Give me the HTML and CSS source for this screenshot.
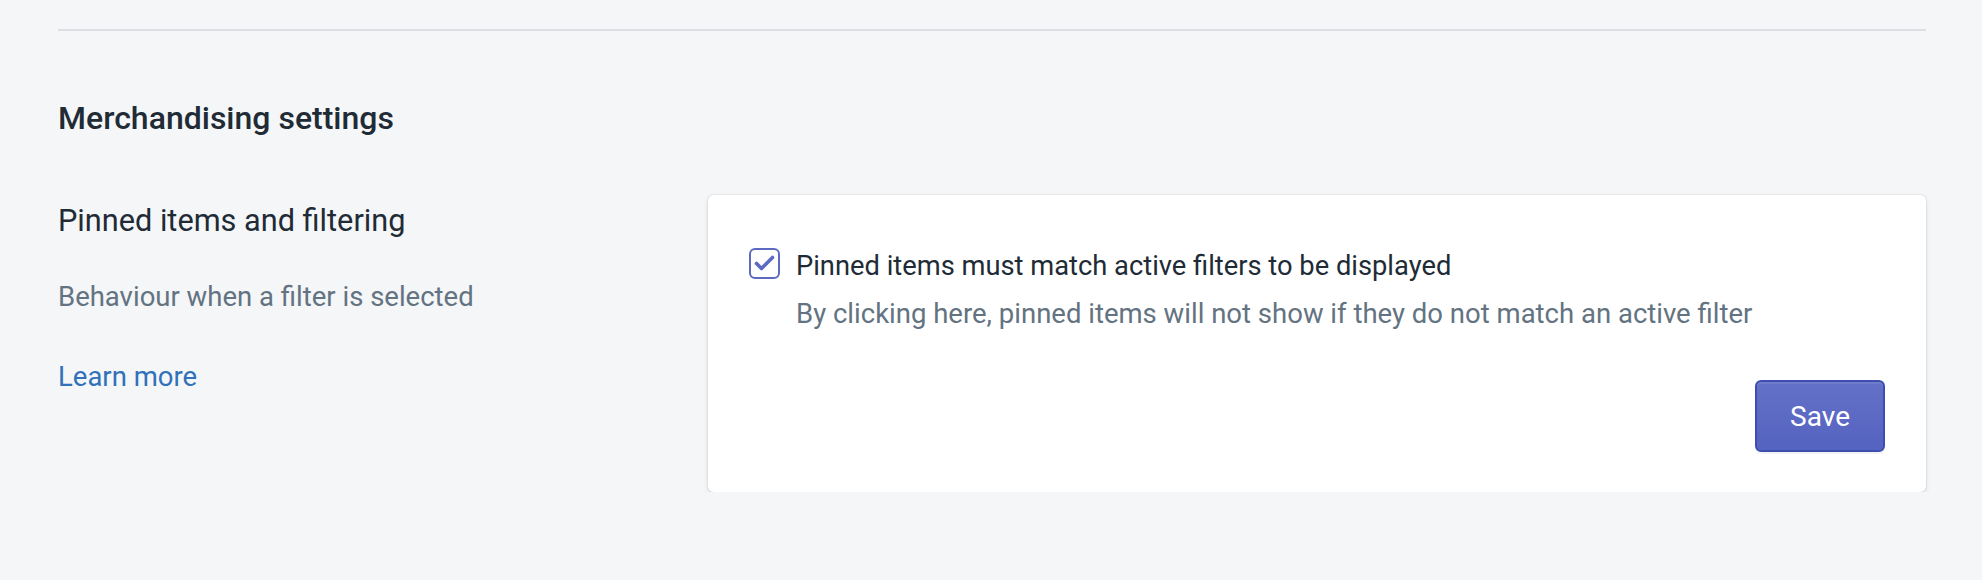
FILE: index.html
```html
<!DOCTYPE html>
<html lang="en">
<head>
<meta charset="utf-8">
<title>Merchandising settings</title>
<link rel="stylesheet" href="styles.css">
</head>
<body>
<div class="page">
  <hr class="divider">
  <h2 class="section-title">Merchandising settings</h2>
  <div class="annotated">
    <div class="annotation">
      <h3 class="annotation-title">Pinned items and filtering</h3>
      <p class="annotation-desc">Behaviour when a filter is selected</p>
      <a class="link" href="#">Learn more</a>
    </div>
    <div class="card">
      <label class="choice">
        <span class="checkbox">
          <svg width="31" height="31" viewBox="0 0 31 31" aria-hidden="true">
            <polyline points="7.5,15.5 12.5,20.5 23.5,9.5" fill="none" stroke="#5c6ac4" stroke-width="3.6" stroke-linecap="round" stroke-linejoin="round"/>
          </svg>
        </span>
        <span class="choice-label">Pinned items must match active filters to be displayed</span>
      </label>
      <p class="help">By clicking here, pinned items will not show if they do not match an active filter</p>
      <div class="actions">
        <button class="btn-primary" type="button">Save</button>
      </div>
    </div>
  </div>
</div>
</body>
</html>
```

FILE: styles.css
```css
html, body {
  margin: 0;
  padding: 0;
  background: #f4f6f8;
}

body {
  font-family: Roboto, "Liberation Sans", Arial, sans-serif;
  color: #212b36;
  font-size: 27.5px;
  line-height: 40px;
}

.page {
  padding: 29px 56px 0 58px;
}

.divider {
  margin: 0;
  border: 0;
  border-top: 2px solid #dcdfe3;
  height: 0;
}

.section-title {
  margin: 63px 0 0;
  font-size: 32px;
  line-height: 48px;
  font-weight: 500;
  color: #212b36;
}

.annotated {
  margin-top: 53px;
  display: grid;
  grid-template-columns: 650px 1fr;
}

.annotation-title {
  margin: 2px 0 0;
  font-size: 30.7px;
  line-height: 48px;
  font-weight: 400;
  color: #212b36;
}

.annotation-desc {
  margin: 32px 0 0;
  color: #637381;
}

.link {
  display: inline-block;
  margin-top: 40px;
  color: #3071b9;
  text-decoration: none;
}

.card {
  background: #ffffff;
  border-radius: 6px;
  box-shadow: 0 0 0 1px rgba(63, 63, 68, 0.06), 0 2px 5px 0 rgba(63, 63, 68, 0.14);
  padding: 51px 41px 40px 41px;
}

.choice {
  display: flex;
  align-items: flex-start;
  gap: 16px;
}

.checkbox {
  flex: none;
  width: 31px;
  height: 31px;
  margin-top: 2px;
  box-sizing: border-box;
  border: 2px solid #5c6ac4;
  border-radius: 6px;
  background: #ffffff;
  display: flex;
  align-items: center;
  justify-content: center;
}

.checkbox svg {
  display: block;
  flex: none;
}

.choice-label {
  color: #212b36;
  font-size: 27.3px;
}

.help {
  margin: 8px 0 0 47px;
  color: #637381;
}

.actions {
  margin-top: 46px;
  display: flex;
  justify-content: flex-end;
}

.btn-primary {
  height: 72px;
  padding: 0 33px;
  font-family: inherit;
  font-size: 28px;
  color: #ffffff;
  background: linear-gradient(180deg, #6371c7, #5563c1);
  border: 2px solid #3f4eae;
  border-radius: 6px;
  box-shadow: inset 0 2px 0 0 #6f7bcb, 0 2px 0 0 rgba(22, 29, 37, 0.05);
  cursor: pointer;
}
```
